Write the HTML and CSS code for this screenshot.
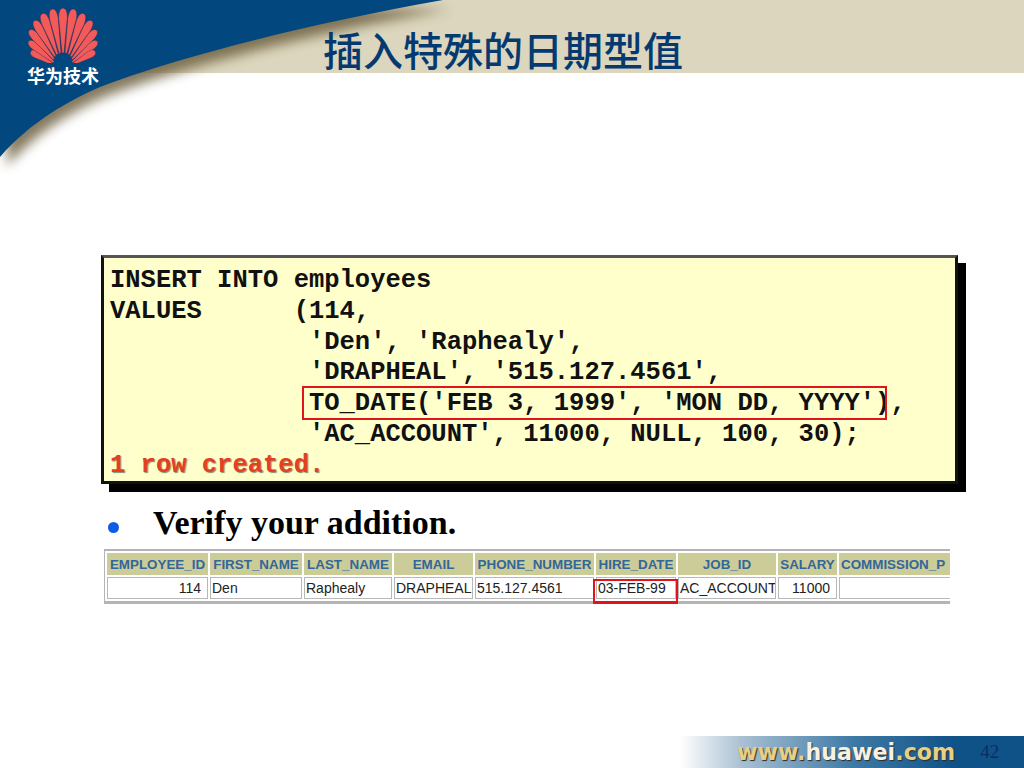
FILE: index.html
```html
<!DOCTYPE html>
<html lang="zh">
<head>
<meta charset="utf-8">
<title>插入特殊的日期型值</title>
<link rel="stylesheet" href="styles.css">
</head>
<body>
<div class="slide">
  <svg class="backdrop" width="1024" height="190" viewBox="0 0 1024 190" aria-hidden="true">
    <defs>
      <filter id="soft" x="-10%" y="-20%" width="120%" height="150%"><feGaussianBlur stdDeviation="6"/></filter>
    </defs>
    <rect width="1024" height="73" fill="#dbd6bd"/>
    <path d="M0 0H443C300 25 170 60 100 87C70 100 30 122 0 157Z" transform="translate(7 9)" fill="#6f6243" opacity=".85" filter="url(#soft)"/>
    <path d="M0 0H443C300 25 170 60 100 87C70 100 30 122 0 157Z" fill="#03477f"/>
  </svg>

  <div class="logo">
    <svg class="shell" width="76" height="58" viewBox="0 0 76 58" aria-hidden="true">
      <defs>
        <path id="blade" d="M-1 -17L-4.4 -52Q-4.4 -62 0 -62Q4.4 -62 4.4 -52L1 -17Z"/>
      </defs>
      <g transform="translate(38 65)" fill="#f35a5a" stroke="#2a2f55" stroke-width=".5">
        <use href="#blade" transform="rotate(-60) scale(.8 .6)"/>
        <use href="#blade" transform="rotate(-50) scale(.85 .72)"/>
        <use href="#blade" transform="rotate(-40) scale(.9 .84)"/>
        <use href="#blade" transform="rotate(-30) scale(.95 .92)"/>
        <use href="#blade" transform="rotate(-20) scale(1 .97)"/>
        <use href="#blade" transform="rotate(-10) scale(1 1)"/>
        <use href="#blade"/>
        <use href="#blade" transform="rotate(10) scale(1 1)"/>
        <use href="#blade" transform="rotate(20) scale(1 .97)"/>
        <use href="#blade" transform="rotate(30) scale(.95 .92)"/>
        <use href="#blade" transform="rotate(40) scale(.9 .84)"/>
        <use href="#blade" transform="rotate(50) scale(.85 .72)"/>
        <use href="#blade" transform="rotate(60) scale(.8 .6)"/>
      </g>
    </svg>
    <div class="logo-text">华为技术</div>
  </div>

  <h1 class="title">插入特殊的日期型值</h1>

  <main class="content">
    <div class="code-box">
      <pre class="code">INSERT INTO employees
VALUES      (114,
             'Den', 'Raphealy',
             'DRAPHEAL', '515.127.4561',
             TO_DATE('FEB 3, 1999', 'MON DD, YYYY'),
             'AC_ACCOUNT', 11000, NULL, 100, 30);
<span class="created">1 row created.</span></pre>
      <span class="code-mark"></span>
    </div>

    <div class="bullet-row">
      <span class="bullet"></span>
      <span class="bullet-text">Verify your addition.</span>
    </div>

    <div class="table-wrap">
      <table class="result">
        <thead>
          <tr>
            <th>EMPLOYEE_ID</th><th>FIRST_NAME</th><th>LAST_NAME</th><th>EMAIL</th><th>PHONE_NUMBER</th><th>HIRE_DATE</th><th>JOB_ID</th><th>SALARY</th><th class="left">COMMISSION_P</th>
          </tr>
        </thead>
        <tbody>
          <tr>
            <td class="num">114</td><td>Den</td><td>Raphealy</td><td>DRAPHEAL</td><td>515.127.4561</td><td class="marked">03-FEB-99<span class="date-mark"></span></td><td>AC_ACCOUNT</td><td class="num">11000</td><td></td>
          </tr>
        </tbody>
      </table>
    </div>
  </main>

  <footer class="footer">
    <span class="site"><span class="gold">www.</span>huawei<span class="gold">.com</span></span>
    <span class="page-no">42</span>
  </footer>
</div>
</body>
</html>
```

FILE: styles.css
```css
html, body {
  margin: 0;
  padding: 0;
  background: #fff;
}

.slide {
  position: relative;
  width: 1024px;
  height: 768px;
  overflow: hidden;
  display: flex;
  flex-direction: column;
  background: #fff;
}

.backdrop {
  position: absolute;
  left: 0;
  top: 0;
}

.logo {
  position: absolute;
  left: 25px;
  top: 5px;
  width: 76px;
  display: flex;
  flex-direction: column;
  align-items: center;
}

.shell {
  display: block;
}

.logo-text {
  margin-top: 3px;
  font: 700 18px/18px "Noto Sans CJK SC", sans-serif;
  color: #fff;
  white-space: nowrap;
}

.title {
  position: relative;
  margin: 0;
  padding: 29px 0 2px 323px;
  font: 500 40px/40px "Noto Sans CJK SC", sans-serif;
  color: #053a70;
  white-space: nowrap;
}

.content {
  position: relative;
  display: flex;
  flex-direction: column;
  align-items: flex-start;
  padding: 184px 0 0 101px;
}

.code-box {
  position: relative;
  width: 851px;
  height: 223px;
  border: 3px solid #111;
  border-top-color: #555;
  background: #ffc;
  box-shadow: 8px 8px 0 #000;
}

.code {
  margin: 0;
  padding: 8px 0 0 6px;
  font: 700 25.5px/30.8px "Liberation Mono", monospace;
  color: #111;
}

.created {
  color: #e2401f;
  text-shadow: 1px 1px 1px #8a8a70;
}

.code-mark {
  position: absolute;
  left: 198px;
  top: 128px;
  width: 581px;
  height: 30px;
  border: 2px solid #e0141c;
}

.bullet-row {
  display: flex;
  align-items: center;
  margin-top: 19px;
  height: 40px;
}

.bullet {
  width: 11px;
  height: 11px;
  margin: 8px 0 0 7px;
  border-radius: 50%;
  background: #0b5ce8;
}

.bullet-text {
  margin-left: 34px;
  font: 700 34px/40px "Liberation Serif", serif;
  color: #000;
  white-space: nowrap;
}

.table-wrap {
  width: 846px;
  margin: 6px 0 0 3px;
  overflow: hidden;
}

.result {
  table-layout: fixed;
  width: 980px;
  border-collapse: separate;
  border-spacing: 2px;
  border-style: solid;
  border-color: #b4b4b4;
  border-width: 2px 1px 3px;
  font-family: "Liberation Sans", sans-serif;
}

.result th {
  height: 22px;
  padding: 0;
  box-sizing: border-box;
  background: #cc9;
  color: #369;
  font-size: 13.4px;
  font-weight: 700;
  text-align: center;
  white-space: nowrap;
  overflow: hidden;
}

.result th:nth-child(1), .result td:nth-child(1) { width: 101px; }
.result th:nth-child(2), .result td:nth-child(2) { width: 92px; }
.result th:nth-child(3), .result td:nth-child(3) { width: 88px; }
.result th:nth-child(4), .result td:nth-child(4) { width: 79px; }
.result th:nth-child(5), .result td:nth-child(5) { width: 119px; }
.result th:nth-child(6), .result td:nth-child(6) { width: 80px; }
.result th:nth-child(7), .result td:nth-child(7) { width: 98px; }
.result th:nth-child(8), .result td:nth-child(8) { width: 59px; }

.result th.left {
  text-align: left;
  padding-left: 2px;
}

.result td {
  height: 22px;
  padding: 0 1px;
  box-sizing: border-box;
  border: 1px solid #b8b8b8;
  background: #fff;
  color: #222;
  font-size: 14px;
  white-space: nowrap;
  overflow: hidden;
}

.result td.num {
  text-align: right;
  padding-right: 6px;
}

.result td.marked {
  position: relative;
  overflow: visible;
}

.date-mark {
  position: absolute;
  left: -4px;
  top: 1px;
  width: 81px;
  height: 20px;
  border: 2px solid #e0141c;
  border-bottom-width: 3px;
}

.footer {
  margin-top: auto;
  height: 32px;
  margin-left: 680px;
  display: flex;
  align-items: center;
  background: linear-gradient(90deg, #fff 0, #a9c0d2 18%, #3f7aa6 50%, #0f5288 80%, #0f5288 100%);
}

.site {
  margin-left: 57px;
  font: 700 22.2px/32px "DejaVu Sans", sans-serif;
  color: #f6f1e2;
  text-shadow: 1px 1px 1px #2b2b2b;
  white-space: nowrap;
}

.gold {
  color: #e8cf86;
}

.page-no {
  margin-left: 25px;
  font: 400 19px/32px "Liberation Serif", serif;
  color: #0a2f5c;
}
```
